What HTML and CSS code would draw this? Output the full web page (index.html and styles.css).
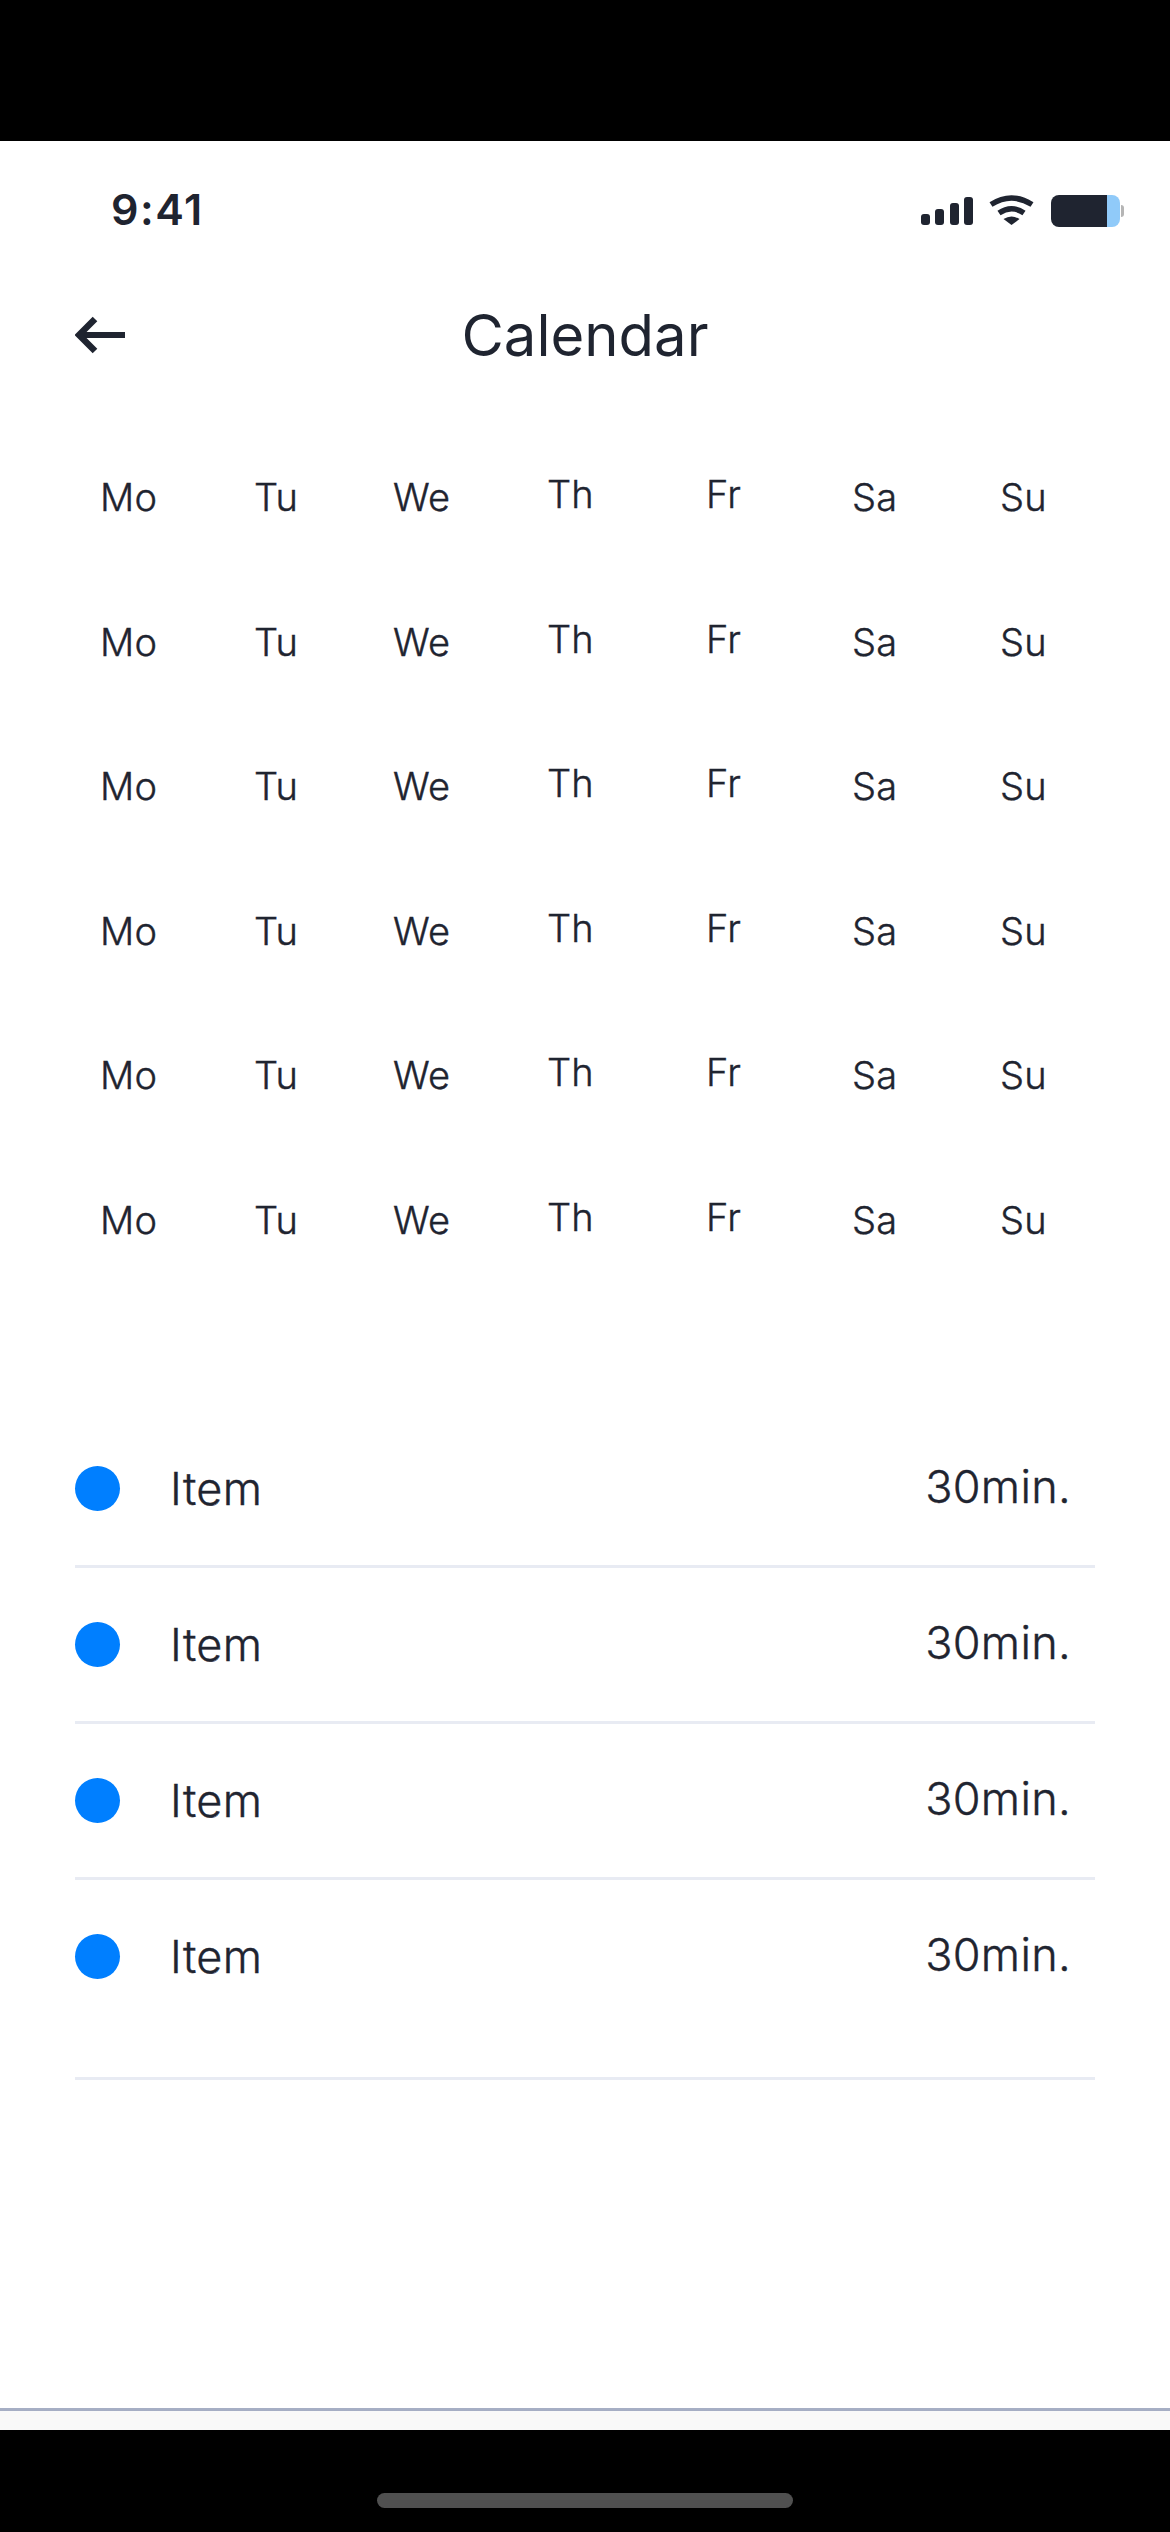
FILE: index.html
```html
<!DOCTYPE html>
<html>
<head>
  <meta charset="UTF-8" />
  <title>Calendar</title>
  <link rel="stylesheet" href="styles.css">
</head>
<body>
  <div class="bezel-top"></div>

  <main class="screen">
    <div class="status-bar">
      <span class="time">9:41</span>
      <div class="status-icons">
        <div class="signal">
          <span class="bar bar-1"></span>
          <span class="bar bar-2"></span>
          <span class="bar bar-3"></span>
          <span class="bar bar-4"></span>
        </div>
        <svg class="wifi" width="45" height="30" viewBox="0 0 45 30">
          <path d="M2 9.5 Q22.5 -3.5 43 9.5" fill="none" stroke="#1f2430" stroke-width="5.5" />
          <path d="M10 18 Q22.5 9.5 35 18" fill="none" stroke="#1f2430" stroke-width="5.5" />
          <path d="M14.5 24 Q22.5 19 30.5 24 L22.5 30 Z" fill="#1f2430" />
        </svg>
        <div class="battery">
          <span class="battery-level"></span>
          <span class="battery-rest"></span>
          <span class="battery-nub"></span>
        </div>
      </div>
    </div>

    <header class="nav">
      <svg class="back" width="50" height="38" viewBox="0 0 50 38">
        <path d="M50 19 H4" fill="none" stroke="#1f2430" stroke-width="6" />
        <path d="M20 3 L4 19 L20 35" fill="none" stroke="#1f2430" stroke-width="6.5" />
      </svg>
      <h1 class="title">Calendar</h1>
    </header>

    <section class="week-list">
      <div class="week"><span>Mo</span><span>Tu</span><span>We</span><span class="up">Th</span><span class="up">Fr</span><span>Sa</span><span>Su</span></div>
      <div class="week"><span>Mo</span><span>Tu</span><span>We</span><span class="up">Th</span><span class="up">Fr</span><span>Sa</span><span>Su</span></div>
      <div class="week"><span>Mo</span><span>Tu</span><span>We</span><span class="up">Th</span><span class="up">Fr</span><span>Sa</span><span>Su</span></div>
      <div class="week"><span>Mo</span><span>Tu</span><span>We</span><span class="up">Th</span><span class="up">Fr</span><span>Sa</span><span>Su</span></div>
      <div class="week"><span>Mo</span><span>Tu</span><span>We</span><span class="up">Th</span><span class="up">Fr</span><span>Sa</span><span>Su</span></div>
      <div class="week"><span>Mo</span><span>Tu</span><span>We</span><span class="up">Th</span><span class="up">Fr</span><span>Sa</span><span>Su</span></div>
    </section>

    <section class="items">
      <div class="item"><span class="dot"></span><span class="item-name">Item</span><span class="item-time">30min.</span></div>
      <div class="item"><span class="dot"></span><span class="item-name">Item</span><span class="item-time">30min.</span></div>
      <div class="item"><span class="dot"></span><span class="item-name">Item</span><span class="item-time">30min.</span></div>
      <div class="item item-last"><span class="dot"></span><span class="item-name">Item</span><span class="item-time">30min.</span></div>
    </section>
  </main>

  <footer class="tab-strip"></footer>

  <div class="bezel-bottom">
    <span class="home-pill"></span>
  </div>
</body>
</html>
```

FILE: styles.css
```css
* {
  box-sizing: border-box;
}

html,
body {
  margin: 0;
  padding: 0;
}

body {
  width: 1170px;
  height: 2532px;
  display: flex;
  flex-direction: column;
  overflow: hidden;
  background: #000;
  font-family: Inter, "Noto Sans", sans-serif;
  color: #1f2430;
}

.bezel-top {
  height: 141px;
  background: #000;
}

.screen {
  height: 2270px;
  background: #fff;
  border-bottom: 3px solid #a6aec4;
}

/* status bar */
.status-bar {
  height: 70px;
  margin-top: 49px;
  padding: 0 46px 0 111px;
  display: flex;
  justify-content: space-between;
  align-items: flex-start;
}

.time {
  font-size: 43px;
  line-height: 38px;
  font-weight: 600;
  letter-spacing: 1.5px;
}

.status-icons {
  display: flex;
  align-items: flex-start;
  margin-top: 5px;
}

.signal {
  width: 52px;
  height: 30px;
  display: flex;
  align-items: flex-end;
  justify-content: space-between;
}

.bar {
  width: 9px;
  background: #1f2430;
  border-radius: 3px;
}

.bar-1 { height: 11px; }
.bar-2 { height: 16px; }
.bar-3 { height: 22px; }
.bar-4 { height: 28px; }

.wifi {
  margin-left: 16px;
}

.battery {
  margin-left: 17px;
  width: 73px;
  height: 32px;
  display: flex;
  align-items: center;
}

.battery-level {
  width: 56px;
  height: 32px;
  background: #1f2430;
  border-radius: 8px 0 0 8px;
}

.battery-rest {
  width: 13px;
  height: 32px;
  background: #90caf9;
  border-radius: 0 8px 8px 0;
}

.battery-nub {
  width: 3px;
  height: 12px;
  margin-left: 1px;
  background: #b5b5b5;
  border-radius: 0 3px 3px 0;
}

/* nav */
.nav {
  display: flex;
  align-items: center;
  justify-content: center;
  position: relative;
  height: 60px;
  margin-top: 45px;
}

.back {
  position: absolute;
  left: 75px;
  top: 11px;
}

.title {
  margin: 0;
  font-size: 58px;
  line-height: 60px;
  font-weight: 400;
}

/* weekday rows */
.week-list {
  margin-top: 109px;
  padding-left: 100px;
}

.week {
  display: grid;
  grid-template-columns: 154px 139px 154px 159px 146px 148px auto;
  height: 144.5px;
  font-size: 38px;
  line-height: 46px;
  font-weight: 300;
  -webkit-text-stroke: 0.4px #1f2430;
  letter-spacing: 0.2px;
}

.up {
  margin-top: -3px;
}

/* items */
.items {
  margin: 0 75px;
  padding-top: 71px;
}

.item {
  height: 156px;
  display: flex;
  align-items: center;
  border-bottom: 3px solid #e8ebf3;
}

.item-last {
  height: 200px;
  padding-bottom: 44px;
}

.dot {
  width: 45px;
  height: 45px;
  border-radius: 50%;
  background: #007fff;
}

.item-name,
.item-time {
  font-size: 45px;
  line-height: 54px;
  font-weight: 300;
  -webkit-text-stroke: 0.4px #1f2430;
  letter-spacing: 0.3px;
}

.item-name {
  margin-left: 50px;
}

.item-time {
  margin-left: auto;
  margin-right: 24px;
  margin-bottom: 4px;
}

/* bottom */
.tab-strip {
  height: 19px;
  background: #f9f9f9;
}

.bezel-bottom {
  flex: 1;
  background: #000;
  display: flex;
  justify-content: center;
  padding-top: 63px;
}

.home-pill {
  width: 416px;
  height: 15px;
  border-radius: 8px;
  background: #505050;
}
```
